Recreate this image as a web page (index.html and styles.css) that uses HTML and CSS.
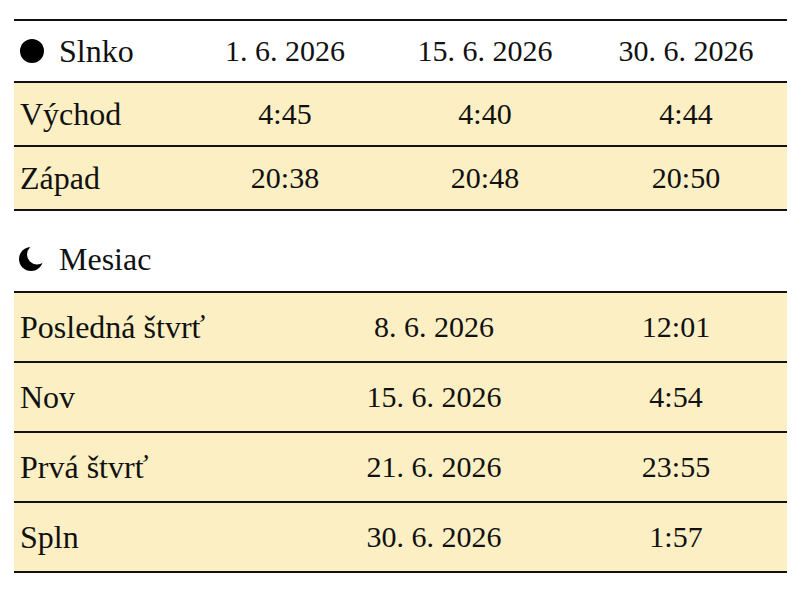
FILE: index.html
```html
<!DOCTYPE html>
<html lang="sk">
<head>
<meta charset="utf-8">
<title>Slnko a Mesiac</title>
<link rel="stylesheet" href="styles.css">
</head>
<body>
<div class="wrap">
  <table class="tbl sun">
    <colgroup><col class="c1"><col class="c2"><col class="c2"><col class="c4"></colgroup>
    <thead>
      <tr>
        <th class="label"><span class="head"><svg class="icon" viewBox="0 0 24 24" width="24" height="24"><circle cx="12" cy="12" r="12" fill="#000"/></svg>Slnko</span></th>
        <th>1. 6. 2026</th>
        <th>15. 6. 2026</th>
        <th>30. 6. 2026</th>
      </tr>
    </thead>
    <tbody>
      <tr><td class="label">Východ</td><td>4:45</td><td>4:40</td><td>4:44</td></tr>
      <tr><td class="label">Západ</td><td>20:38</td><td>20:48</td><td>20:50</td></tr>
    </tbody>
  </table>

  <div class="heading">
    <svg class="icon" viewBox="0 0 24 24" width="24" height="24">
      <defs>
        <mask id="moonmask">
          <rect x="0" y="0" width="24" height="24" fill="#fff"/>
          <circle cx="18" cy="7.5" r="10" fill="#000"/>
        </mask>
      </defs>
      <circle cx="12" cy="12" r="12" fill="#000" mask="url(#moonmask)"/>
    </svg>
    <span>Mesiac</span>
  </div>

  <table class="tbl moon">
    <colgroup><col class="m1"><col class="m2"><col class="m3"></colgroup>
    <tbody>
      <tr><td class="label">Posledná štvrť</td><td>8. 6. 2026</td><td>12:01</td></tr>
      <tr><td class="label">Nov</td><td>15. 6. 2026</td><td>4:54</td></tr>
      <tr><td class="label">Prvá štvrť</td><td>21. 6. 2026</td><td>23:55</td></tr>
      <tr><td class="label">Spln</td><td>30. 6. 2026</td><td>1:57</td></tr>
    </tbody>
  </table>
</div>
</body>
</html>
```

FILE: styles.css
```css
html, body {
  margin: 0;
  padding: 0;
  background: #fff;
}

body {
  font-family: "Liberation Serif", "Times New Roman", serif;
  font-size: 30px;
  color: #111;
}

.wrap {
  width: 773px;
  padding: 19px 0 0 14px;
}

.tbl {
  width: 773px;
  border-collapse: collapse;
  table-layout: fixed;
  border-top: 2px solid #111;
}

.tbl th,
.tbl td {
  padding: 0;
  text-align: center;
  font-weight: normal;
  border-bottom: 2px solid #111;
  white-space: nowrap;
}

.tbl .label {
  text-align: left;
  padding-left: 6px;
  font-size: 32px;
}

.sun .c1 { width: 171px; }
.sun .c2 { width: 200px; }
.sun .c4 { width: 202px; }

.sun thead th {
  height: 60px;
}

.sun tbody td {
  height: 62px;
  background: #fcefc4;
}

.head {
  display: flex;
  align-items: center;
  gap: 15px;
}

.icon {
  display: block;
  flex: none;
}

.heading {
  display: flex;
  align-items: center;
  gap: 16px;
  height: 48px;
  margin: 24px 0 8px;
  padding-left: 5px;
  font-size: 32px;
}

.moon .m1 { width: 289px; }
.moon .m2 { width: 262px; }
.moon .m3 { width: 222px; }

.moon td {
  height: 68px;
  background: #fcefc4;
}
```
